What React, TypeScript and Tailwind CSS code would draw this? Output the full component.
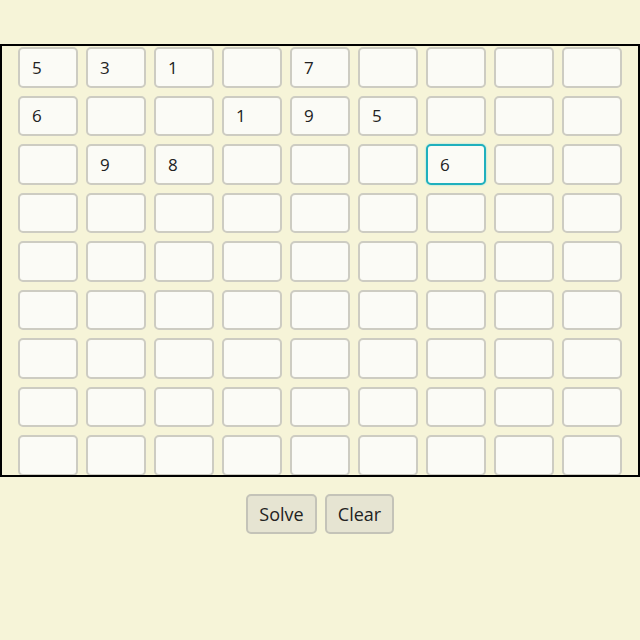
import React from "react";

const initial: string[][] = [
  ["5", "3", "1", "", "7", "", "", "", ""],
  ["6", "", "", "1", "9", "5", "", "", ""],
  ["", "9", "8", "", "", "", "6", "", ""],
  ["", "", "", "", "", "", "", "", ""],
  ["", "", "", "", "", "", "", "", ""],
  ["", "", "", "", "", "", "", "", ""],
  ["", "", "", "", "", "", "", "", ""],
  ["", "", "", "", "", "", "", "", ""],
  ["", "", "", "", "", "", "", "", ""],
];

export default function App() {
  const [board, setBoard] = React.useState(initial);

  const setCell = (r: number, c: number, v: string) => {
    const next = board.map((row) => row.slice());
    next[r][c] = v.replace(/[^1-9]/g, "").slice(-1);
    setBoard(next);
  };

  const clear = () => setBoard(initial.map((row) => row.map(() => "")));

  return (
    <div
      className="w-[640px] h-[640px] bg-[#f6f4d8] pt-[44px] text-[#222]"
      style={{ fontFamily: '"Open Sans", "Noto Sans", sans-serif' }}
    >
      {/* Board */}
      <div className="h-[433px] border-2 border-black overflow-hidden pt-px">
        <div className="grid grid-cols-[repeat(9,60px)] gap-x-2 gap-y-2 justify-center">
          {board.map((row, r) =>
            row.map((val, c) => {
              const focused = r === 2 && c === 6;
              return (
                <input
                  key={`${r}-${c}`}
                  value={val}
                  onChange={(e) => setCell(r, c, e.target.value)}
                  className={`w-[60px] h-[40.5px] rounded-[5px] pl-[12px] text-[17px] bg-[#fbfbf6] outline-none ${
                    focused
                      ? "border-2 border-[#1fb0bd] shadow-[0_0_2px_#7fd6dd]"
                      : "border-2 border-[#cdccc2]"
                  }`}
                />
              );
            })
          )}
        </div>
      </div>

      {/* Actions */}
      <div className="flex justify-center gap-2 mt-[17px]">
        <button className="w-[71px] h-[40px] rounded-[5px] border-2 border-[#c4c3b8] bg-[#e6e4d2] text-[18px] text-[#222]">
          Solve
        </button>
        <button
          onClick={clear}
          className="w-[69px] h-[40px] rounded-[5px] border-2 border-[#c4c3b8] bg-[#e6e4d2] text-[18px] text-[#222]"
        >
          Clear
        </button>
      </div>
    </div>
  );
}
